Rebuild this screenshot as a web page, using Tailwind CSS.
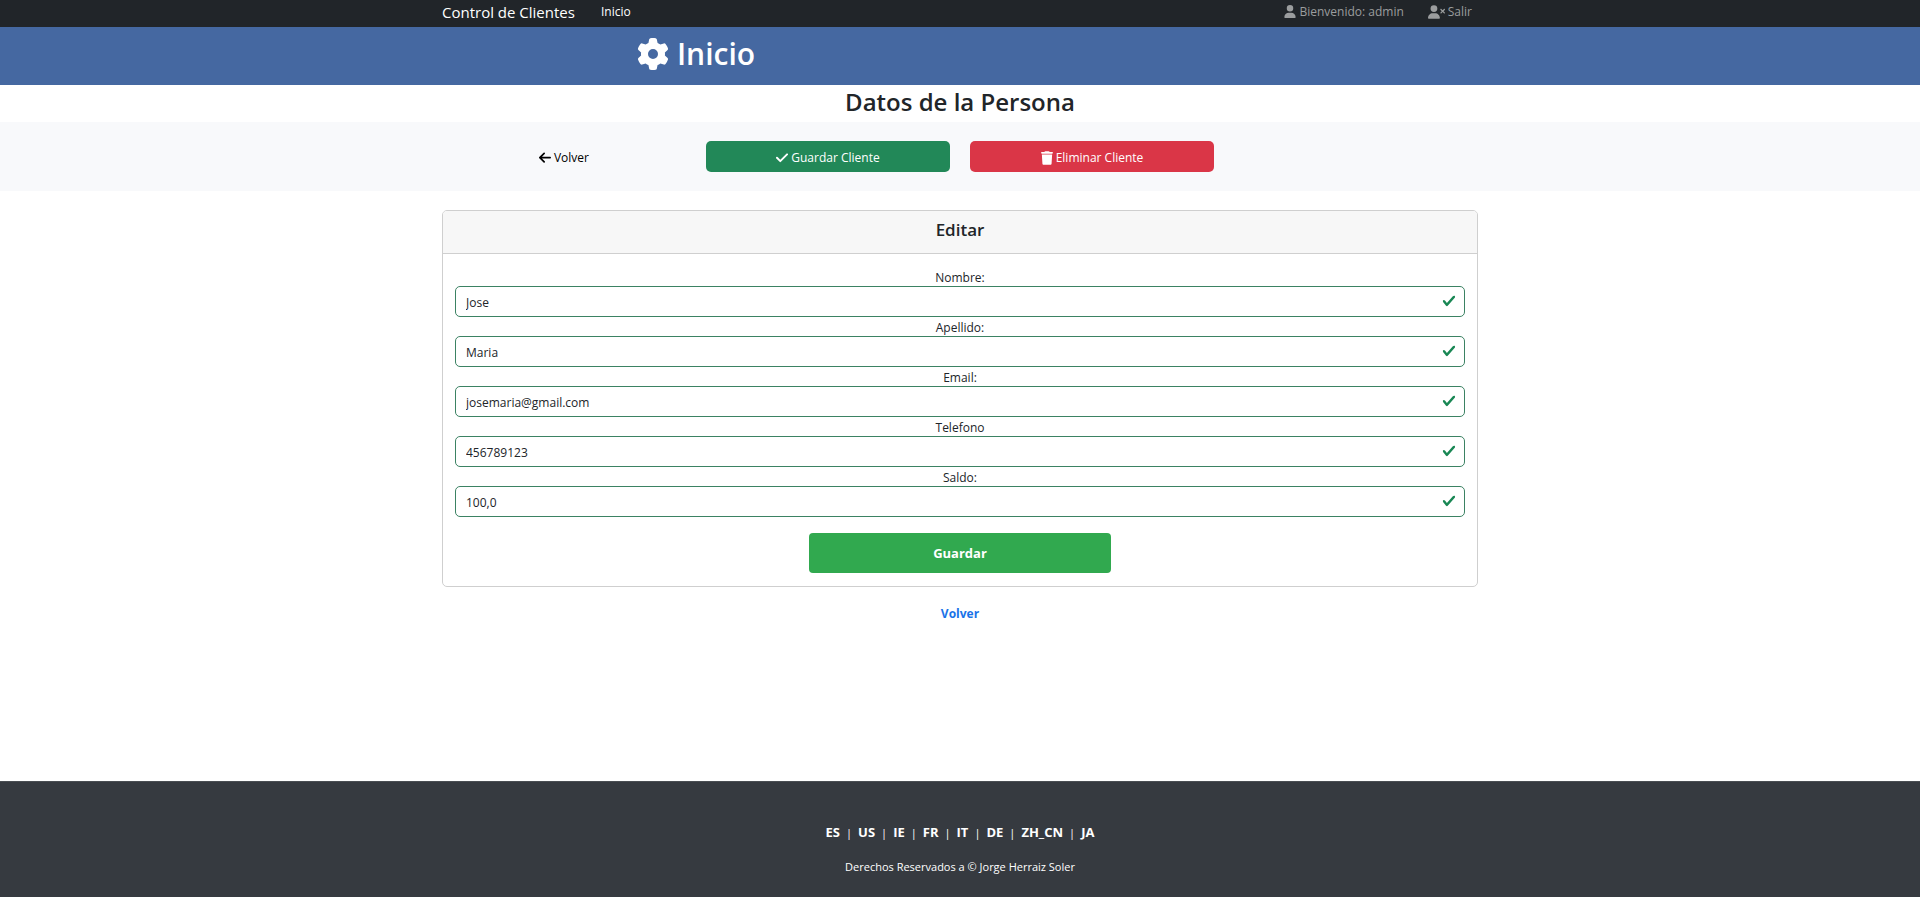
<!DOCTYPE html>
<html lang="es">
<head>
<meta charset="utf-8">
<meta name="viewport" content="width=device-width, initial-scale=1">
<title>Control de Clientes</title>
<script src="https://cdn.jsdelivr.net/npm/@tailwindcss/browser@4"></script>
</head>
<body class="flex min-h-screen flex-col bg-white font-['Segoe_UI','Open_Sans','Noto_Sans',sans-serif] text-xs text-[#212529]">

<nav class="bg-[#212529]">
  <div class="mx-auto flex h-[27px] max-w-[1056px] items-center px-[10px] pb-1">
    <a href="#" class="text-[15px] text-white">Control de Clientes</a>
    <a href="#" class="ml-[26px] text-white">Inicio</a>
    <div class="ml-auto flex items-center gap-6 pr-[6px] text-[#9b9d9e]">
      <a href="#" class="flex items-center gap-[3px]">
        <svg class="h-[13px] w-3" viewBox="0 0 448 512" fill="currentColor" aria-hidden="true"><path d="M224 256A128 128 0 1 0 224 0a128 128 0 1 0 0 256zm-45.700 48C79.800 304 0 383.800 0 482.300 0 498.700 13.300 512 29.700 512h388.600c16.400 0 29.700-13.300 29.700-29.700C448 383.800 368.200 304 269.700 304h-91.400z"/></svg>
        Bienvenido: admin</a>
      <a href="#" class="flex items-center gap-[3px]">
        <svg class="h-[14px] w-[17px]" viewBox="0 0 640 512" fill="currentColor" aria-hidden="true"><path d="M224 256A128 128 0 1 0 224 0a128 128 0 1 0 0 256zm-45.700 48C79.800 304 0 383.800 0 482.300 0 498.700 13.300 512 29.700 512h388.600c16.400 0 29.700-13.300 29.700-29.700C448 383.800 368.200 304 269.700 304h-91.400zM471 143c-9.400 9.400-9.400 24.600 0 33.900l47 47-47 47c-9.400 9.400-9.400 24.600 0 33.900s24.600 9.400 33.900 0l47-47 47 47c9.400 9.400 24.600 9.400 33.900 0s9.400-24.600 0-33.900l-47-47 47-47c9.400-9.400 9.400-24.600 0-33.900s-24.600-9.400-33.900 0l-47 47-47-47c-9.400-9.400-24.600-9.400-33.900 0z"/></svg>
        Salir</a>
    </div>
  </div>
</nav>

<header class="bg-[#4568a1] text-white">
  <div class="mx-auto grid max-w-[1056px] grid-cols-2">
    <h1 class="flex h-[58px] items-center justify-center gap-2 pb-[5px] text-[30px] font-semibold">
      <svg class="size-8" viewBox="0 0 512 512" fill="currentColor" aria-hidden="true"><path d="M495.900 166.600c3.200 8.700 .5 18.400-6.400 24.600l-43.300 39.400c1.100 8.300 1.700 16.800 1.700 25.400s-.6 17.100-1.700 25.400l43.300 39.400c6.900 6.200 9.600 15.900 6.400 24.600-4.400 11.900-9.700 23.300-15.800 34.300l-4.700 8.100c-6.600 11-14 21.400-22.100 31.200-5.900 7.200-15.700 9.600-24.500 6.800l-55.700-17.700c-13.400 10.300-28.200 18.900-44 25.400l-12.500 57.100c-2 9.100-9 16.300-18.200 17.800-13.800 2.300-28 3.500-42.500 3.500s-28.700-1.200-42.500-3.500c-9.200-1.500-16.200-8.700-18.200-17.800l-12.500-57.100c-15.800-6.500-30.600-15.100-44-25.400L83.100 425.900c-8.800 2.800-18.600 .3-24.500-6.800-8.100-9.800-15.500-20.200-22.100-31.200l-4.700-8.100c-6.100-11-11.400-22.400-15.800-34.300-3.200-8.700-.5-18.400 6.400-24.600l43.300-39.400C64.600 273.100 64 264.600 64 256s.6-17.100 1.700-25.400L22.400 191.200c-6.900-6.200-9.600-15.900-6.400-24.600 4.400-11.900 9.700-23.300 15.800-34.300l4.700-8.100c6.600-11 14-21.400 22.100-31.200 5.900-7.200 15.700-9.600 24.500-6.800l55.700 17.700c13.400-10.300 28.200-18.900 44-25.400l12.500-57.100c2-9.100 9-16.300 18.200-17.800C227.300 1.200 241.500 0 256 0s28.700 1.200 42.500 3.500c9.200 1.500 16.200 8.700 18.200 17.800l12.500 57.100c15.800 6.500 30.600 15.100 44 25.400l55.700-17.700c8.800-2.800 18.600-.3 24.500 6.800 8.100 9.800 15.500 20.200 22.100 31.200l4.700 8.100c6.100 11 11.400 22.400 15.800 34.300zM256 336a80 80 0 1 0 0-160 80 80 0 1 0 0 160z"/></svg>
      Inicio
    </h1>
  </div>
</header>

<main class="flex-1">
  <h2 class="h-[37px] text-center text-[24px]/[34px] font-semibold">Datos de la Persona</h2>

  <section class="bg-[#f8f9fb] py-[19px]">
    <div class="mx-auto grid max-w-[1056px] grid-cols-4">
      <div class="px-[10px]">
        <a href="#" class="flex h-[31px] items-center justify-center gap-[3px] pt-[2px] text-black">
          <svg class="h-3 w-3" viewBox="0 0 448 448" fill="none" stroke="currentColor" stroke-width="64" stroke-linecap="round" stroke-linejoin="round" aria-hidden="true"><path d="M416 208H40M192 48L32 208l160 160"/></svg>
          Volver</a>
      </div>
      <div class="px-[10px]">
        <button type="submit" form="cliente" class="flex h-[31px] w-full items-center justify-center gap-[3px] rounded-[5px] bg-[#228858] pt-[2px] text-white">
          <svg class="h-3 w-3" viewBox="0 0 448 448" fill="none" stroke="currentColor" stroke-width="72" stroke-linecap="round" stroke-linejoin="round" aria-hidden="true"><path d="M36 216l124 124L412 88"/></svg>
          Guardar Cliente</button>
      </div>
      <div class="px-[10px]">
        <button type="button" class="flex h-[31px] w-full items-center justify-center gap-[3px] rounded-[5px] bg-[#da3647] pt-[2px] text-white">
          <svg class="h-[14px] w-3" viewBox="0 0 448 512" fill="currentColor" aria-hidden="true"><path d="M135.200 17.700C140.600 6.800 151.700 0 163.800 0h120.400c12.100 0 23.200 6.800 28.600 17.700L320 32h96c17.700 0 32 14.300 32 32s-14.300 32-32 32H32C14.300 96 0 81.700 0 64s14.300-32 32-32h96l7.200-14.300zM32 128h384l-21.200 339c-1.600 25.300-22.600 45-47.900 45H101.100c-25.300 0-46.300-19.700-47.900-45L32 128z"/></svg>
          Eliminar Cliente</button>
      </div>
    </div>
  </section>

  <div class="mx-auto max-w-[1056px] px-[10px] pt-[19px] text-center">
    <div class="rounded-[5px] border border-[#cfcfcf]">
      <h4 class="h-[43px] rounded-t-[4px] border-b border-[#cfcfcf] bg-[#f7f7f7] text-[17px]/[38px] font-semibold">Editar</h4>
      <form id="cliente" class="px-3 pt-[13px] pb-[13px]">
        <label for="nombre" class="block h-[19px] leading-[22px]">Nombre:</label>
        <div class="relative">
          <input id="nombre" type="text" value="Jose" class="block h-[31px] w-full rounded-[5px] border border-[#3b8263] bg-white pt-[2px] pr-10 pl-[10px]">
          <svg class="absolute top-2 right-[9px] size-[14px]" viewBox="0 0 8 8" fill="#198754" aria-hidden="true"><path d="M2.300 6.730.6 4.530c-.4-1.040.46-1.400 1.100-.8l1.100 1.400 3.400-3.800c.6-.63 1.600-.27 1.200.7l-4 4.600c-.43.500-.8.400-1.100.1z"/></svg>
        </div>
        <label for="apellido" class="block h-[19px] leading-[22px]">Apellido:</label>
        <div class="relative">
          <input id="apellido" type="text" value="Maria" class="block h-[31px] w-full rounded-[5px] border border-[#3b8263] bg-white pt-[2px] pr-10 pl-[10px]">
          <svg class="absolute top-2 right-[9px] size-[14px]" viewBox="0 0 8 8" fill="#198754" aria-hidden="true"><path d="M2.300 6.730.6 4.530c-.4-1.040.46-1.400 1.100-.8l1.100 1.400 3.400-3.800c.6-.63 1.600-.27 1.200.7l-4 4.600c-.43.500-.8.400-1.100.1z"/></svg>
        </div>
        <label for="email" class="block h-[19px] leading-[22px]">Email:</label>
        <div class="relative">
          <input id="email" type="email" value="josemaria@gmail.com" class="block h-[31px] w-full rounded-[5px] border border-[#3b8263] bg-white pt-[2px] pr-10 pl-[10px]">
          <svg class="absolute top-2 right-[9px] size-[14px]" viewBox="0 0 8 8" fill="#198754" aria-hidden="true"><path d="M2.300 6.730.6 4.530c-.4-1.040.46-1.400 1.100-.8l1.100 1.400 3.400-3.800c.6-.63 1.600-.27 1.200.7l-4 4.600c-.43.500-.8.400-1.100.1z"/></svg>
        </div>
        <label for="telefono" class="block h-[19px] leading-[22px]">Telefono</label>
        <div class="relative">
          <input id="telefono" type="tel" value="456789123" class="block h-[31px] w-full rounded-[5px] border border-[#3b8263] bg-white pt-[2px] pr-10 pl-[10px]">
          <svg class="absolute top-2 right-[9px] size-[14px]" viewBox="0 0 8 8" fill="#198754" aria-hidden="true"><path d="M2.300 6.730.6 4.530c-.4-1.040.46-1.400 1.100-.8l1.100 1.400 3.400-3.800c.6-.63 1.600-.27 1.200.7l-4 4.600c-.43.500-.8.400-1.100.1z"/></svg>
        </div>
        <label for="saldo" class="block h-[19px] leading-[22px]">Saldo:</label>
        <div class="relative">
          <input id="saldo" type="text" value="100,0" class="block h-[31px] w-full rounded-[5px] border border-[#3b8263] bg-white pt-[2px] pr-10 pl-[10px]">
          <svg class="absolute top-2 right-[9px] size-[14px]" viewBox="0 0 8 8" fill="#198754" aria-hidden="true"><path d="M2.300 6.730.6 4.530c-.4-1.040.46-1.400 1.100-.8l1.100 1.400 3.400-3.800c.6-.63 1.600-.27 1.200.7l-4 4.600c-.43.500-.8.400-1.100.1z"/></svg>
        </div>
        <button type="submit" class="mt-4 h-10 w-[302px] rounded-[4px] bg-[#31a94f] pt-[2px] text-[13px] font-bold text-white">Guardar</button>
      </form>
    </div>
    <a href="#" class="mt-4 inline-block leading-[22px] font-bold text-[#1a73e8]">Volver</a>
  </div>
</main>

<footer class="border-t border-[#4a4e53] bg-[#363a40] pt-[41px] pb-[21px] text-center text-white">
  <div class="flex h-5 items-center justify-center gap-[6px] text-[13px]">
    <a href="#" class="font-bold">ES</a><span class="text-[11px]">|</span>
    <a href="#" class="font-bold">US</a><span class="text-[11px]">|</span>
    <a href="#" class="font-bold">IE</a><span class="text-[11px]">|</span>
    <a href="#" class="font-bold">FR</a><span class="text-[11px]">|</span>
    <a href="#" class="font-bold">IT</a><span class="text-[11px]">|</span>
    <a href="#" class="font-bold">DE</a><span class="text-[11px]">|</span>
    <a href="#" class="font-bold">ZH_CN</a><span class="text-[11px]">|</span>
    <a href="#" class="font-bold">JA</a>
  </div>
  <p class="mt-[15px] text-[11px]/[18px]">Derechos Reservados a © Jorge Herraiz Soler</p>
</footer>
</body>
</html>
